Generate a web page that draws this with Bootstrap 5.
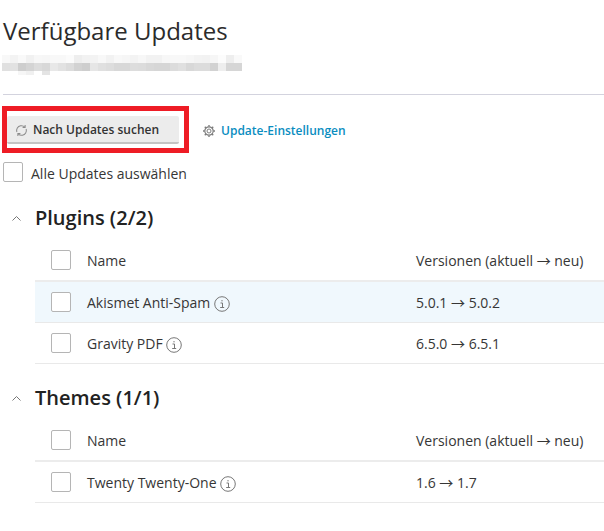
<!DOCTYPE html>
<html lang="de">
<head>
    <meta charset="UTF-8">
    <meta name="viewport" content="width=device-width, initial-scale=1.0">
    <title>Verfügbare Updates</title>
    <link rel="stylesheet" href="https://cdn.jsdelivr.net/npm/bootstrap@5.3.2/dist/css/bootstrap.min.css">
    <style>
        body { font-family: "Open Sans", sans-serif; font-size: 14px; color: #363636; }
        .page-wrap { padding: 17px 0 0 3px; position: relative; }
        .page-title { font-size: 24px; font-weight: 400; line-height: 28px; margin: 0 0 10px; color: #2b2b2b; }
        .blur-strip { display: block; margin-left: -2px; }
        .page-line { margin: 19px 0 21px; border: 0; border-top: 1px solid #d3d3de; opacity: 1; }
        .tool-row { padding-left: 4px; margin-bottom: 18px; }
        .btn-check-updates { background: #ececec; border: 0; border-bottom: 2px solid #c4c4c4; border-radius: 2px; width: 172px; height: 28px; padding: 2px 0 0 8px; gap: 5px; font-size: 12px; font-weight: 600; color: #333; }
        .btn-check-updates:hover { background: #e2e2e2; color: #333; }
        .settings-link { font-size: 12px; font-weight: 600; color: #0a8dbf; text-decoration: none; margin: 2px 0 0 24px; gap: 6px; }
        .mark-box { width: 20px; height: 20px; flex: none; border: 1px solid #b5b5b5; border-radius: 2px; background: #fff; }
        .all-label { line-height: 24px; }
        .group-title { font-size: 20px; font-weight: 600; line-height: 24px; color: #222; margin: 0; }
        .group-head { height: 24px; margin-bottom: 10px; }
        .chev { width: 35px; flex: none; padding-left: 12px; line-height: 0; }
        .up-row { margin-left: 35px; padding-left: 16px; height: 41px; border-bottom: 1px solid #e9e9e9; }
        .up-row.head-row { border-bottom: 2px solid #ececec; height: 42px; }
        .up-row.is-hover { background: #f0f8fd; }
        .name-cell { width: 345px; padding-left: 16px; flex: none; }
        .info-ico { vertical-align: -4px; }
        .arrow-glyph { font-family: "Noto Sans CJK JP", sans-serif; line-height: 1; }
        .group-plugins { margin-top: 20px; }
        .group-themes { margin-top: 22px; }
        .red-frame { position: absolute; left: 2px; top: 106px; width: 187px; height: 47px; border: 5px solid #ee1c25; pointer-events: none; }
    </style>
</head>
<body>
    <div class="page-wrap">
        <h1 class="page-title">Verfügbare Updates</h1>
        <svg class="blur-strip" id="blurStrip" width="241" height="20" aria-hidden="true"></svg>
        <hr class="page-line">

        <div class="d-flex align-items-center tool-row">
            <button class="btn btn-check-updates d-flex align-items-center" type="button">
                <svg width="13" height="13" viewBox="0 0 14 14" fill="none" stroke="#8b8b8b" stroke-width="1.1">
                    <path d="M2 8.6A5.2 5.2 0 0 1 6 1.9a5.2 5.2 0 0 1 4.6 1.5"/>
                    <path d="M12 5.4a5.2 5.2 0 0 1-4 6.7 5.2 5.2 0 0 1-4.6-1.5"/>
                    <path d="M10.9 1v2.7H8.2M3.1 13v-2.7h2.7"/>
                </svg>
                Nach Updates suchen
            </button>
            <a class="settings-link d-flex align-items-center" href="#">
                <svg width="12" height="12" viewBox="0 0 12 12" fill="none" stroke="#7d7d7d">
                    <circle cx="6" cy="6" r="2"/>
                    <circle cx="6" cy="6" r="4.2" stroke-width="1.2"/>
                    <path stroke-width="1.4" d="M6 0v1.6M6 10.4V12M0 6h1.6M10.4 6H12M1.8 1.8l1.1 1.1M9.1 9.1l1.1 1.1M1.8 10.2l1.1-1.1M9.1 2.9l1.1-1.1"/>
                </svg>
                Update-Einstellungen
            </a>
        </div>

        <div class="d-flex align-items-start gap-2">
            <span class="mark-box"></span>
            <span class="all-label">Alle Updates auswählen</span>
        </div>
    </div>

    <section class="group-plugins">
        <div class="d-flex align-items-center group-head">
            <div class="chev"><svg width="9" height="5" viewBox="0 0 9 5" fill="none" stroke="#777"><path d="M.5 4.5l4-4 4 4"/></svg></div>
            <h2 class="group-title">Plugins (2/2)</h2>
        </div>
        <div class="d-flex align-items-center up-row head-row">
            <span class="mark-box"></span><span class="name-cell">Name</span><span>Versionen (aktuell <span class="arrow-glyph">→</span> neu)</span>
        </div>
        <div class="d-flex align-items-center up-row is-hover">
            <span class="mark-box"></span>
            <span class="name-cell">Akismet Anti-Spam <svg class="info-ico" width="16" height="16" viewBox="0 0 16 16" fill="none" stroke="#777"><circle cx="8" cy="8" r="7.3"/><path d="M6.5 7h2v4.5M6.2 11.5h4M8 4v1.4"/></svg></span>
            <span>5.0.1 <span class="arrow-glyph">→</span> 5.0.2</span>
        </div>
        <div class="d-flex align-items-center up-row">
            <span class="mark-box"></span>
            <span class="name-cell">Gravity PDF <svg class="info-ico" width="16" height="16" viewBox="0 0 16 16" fill="none" stroke="#777"><circle cx="8" cy="8" r="7.3"/><path d="M6.5 7h2v4.5M6.2 11.5h4M8 4v1.4"/></svg></span>
            <span>6.5.0 <span class="arrow-glyph">→</span> 6.5.1</span>
        </div>
    </section>

    <section class="group-themes">
        <div class="d-flex align-items-center group-head">
            <div class="chev"><svg width="9" height="5" viewBox="0 0 9 5" fill="none" stroke="#777"><path d="M.5 4.5l4-4 4 4"/></svg></div>
            <h2 class="group-title">Themes (1/1)</h2>
        </div>
        <div class="d-flex align-items-center up-row head-row">
            <span class="mark-box"></span><span class="name-cell">Name</span><span>Versionen (aktuell <span class="arrow-glyph">→</span> neu)</span>
        </div>
        <div class="d-flex align-items-center up-row">
            <span class="mark-box"></span>
            <span class="name-cell">Twenty Twenty-One <svg class="info-ico" width="16" height="16" viewBox="0 0 16 16" fill="none" stroke="#777"><circle cx="8" cy="8" r="7.3"/><path d="M6.5 7h2v4.5M6.2 11.5h4M8 4v1.4"/></svg></span>
            <span>1.6 <span class="arrow-glyph">→</span> 1.7</span>
        </div>
    </section>

    <div class="red-frame"></div>

    <script>
        // verpixelter Streifen unter dem Titel
        const blurRows = [
            "f8 f3 f9 f1 f7 f6 f8 f8 fb ee f2 f3 f8 f2 f8 f6 f3 f7 f2 f2 f7 f8 f8 f6 f3 f2 f6 fc ee f9".split(" "),
            "e0 e2 ce d4 dc d8 e8 e2 dc d2 ce e6 e0 dd d8 d8 dd dc d8 d6 d6 dc e0 d8 dc dc d2 ee d6 d6".split(" "),
            "ff ff f6 f0 ff e4".split(" ")
        ];
        const strip = document.getElementById("blurStrip");
        let markup = "";
        blurRows.forEach((row, y) => {
            row.forEach((gray, x) => {
                markup += `<rect x="${x * 8 + 1}" y="${y * 8}" width="8" height="${y === 2 ? 4 : 8}" fill="#${gray}${gray}${gray}"/>`;
            });
        });
        strip.innerHTML = markup;
    </script>
    <script src="https://cdn.jsdelivr.net/npm/bootstrap@5.3.2/dist/js/bootstrap.bundle.min.js"></script>
</body>
</html>
